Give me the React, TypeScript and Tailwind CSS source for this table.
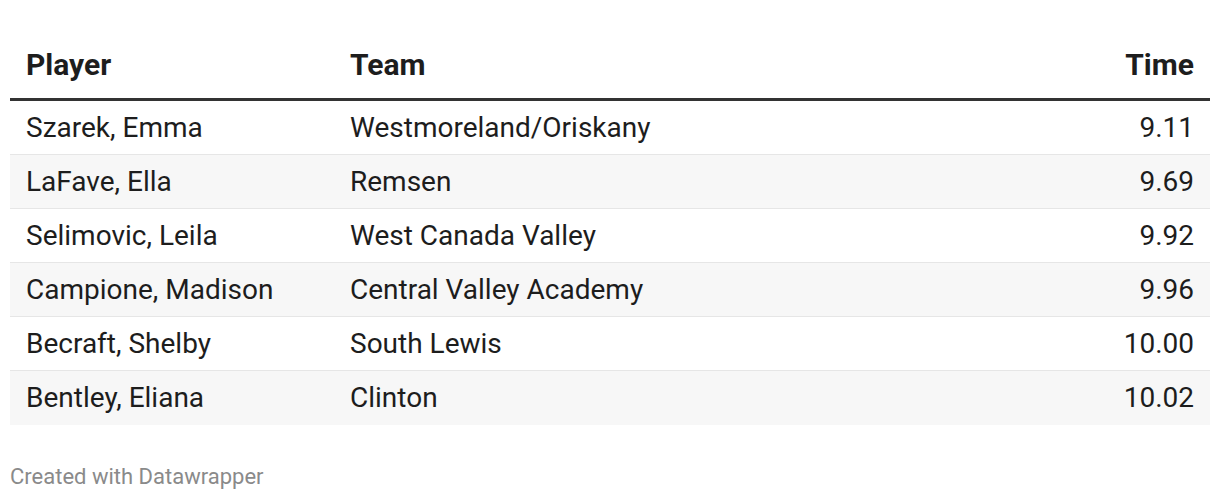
import React from "react";

const rows = [
  ["Szarek, Emma", "Westmoreland/Oriskany", "9.11"],
  ["LaFave, Ella", "Remsen", "9.69"],
  ["Selimovic, Leila", "West Canada Valley", "9.92"],
  ["Campione, Madison", "Central Valley Academy", "9.96"],
  ["Becraft, Shelby", "South Lewis", "10.00"],
  ["Bentley, Eliana", "Clinton", "10.02"],
];

export default function App() {
  return (
    <div className="w-[1220px] h-[500px] bg-white px-[10px] pt-[30px] text-[#1d1d1d]" style={{ fontFamily: "Roboto, 'Liberation Sans', sans-serif" }}>
      <div className="flex items-center h-[71px] border-b-[3px] border-[#333333] text-[30px] font-bold">
        <div className="w-[323px] pl-[16px]">Player</div>
        <div className="flex-1 pl-[17px]">Team</div>
        <div className="pr-[16px] text-right">Time</div>
      </div>
      {rows.map((r, i) => (
        <div
          key={i}
          className={`flex items-center h-[54px] text-[28px] ${i < rows.length - 1 ? "border-b border-[#e6e6e6]" : ""} ${i % 2 === 1 ? "bg-[#f7f7f7]" : "bg-white"}`}
        >
          <div className="w-[323px] pl-[16px]">{r[0]}</div>
          <div className="flex-1 pl-[17px]">{r[1]}</div>
          <div className="pr-[16px] text-right">{r[2]}</div>
        </div>
      ))}
      <div className="mt-[35px] text-[22px] text-[#8a8a8a]">Created with Datawrapper</div>
    </div>
  );
}
